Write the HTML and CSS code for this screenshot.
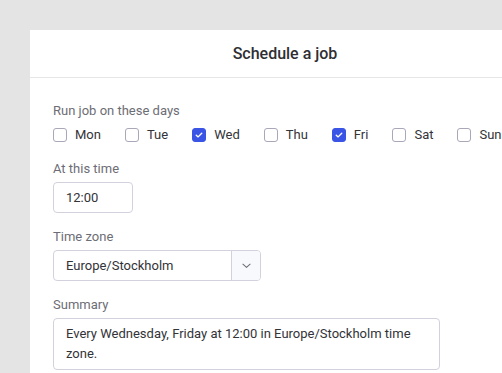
FILE: index.html
```html
<!DOCTYPE html>
<html lang="en">
<head>
<meta charset="utf-8">
<title>Schedule a job</title>
<link rel="stylesheet" href="styles.css">
</head>
<body>
<div class="page">
  <section class="card">
    <header class="card-header">
      <h1 class="card-title">Schedule a job</h1>
    </header>
    <div class="card-body">
      <div class="field">
        <div class="field-label">Run job on these days</div>
        <div class="days">
          <label class="day"><span class="box"></span><span class="day-name">Mon</span></label>
          <label class="day"><span class="box"></span><span class="day-name">Tue</span></label>
          <label class="day"><span class="box checked"><svg viewBox="0 0 14 14" class="tick"><path d="M3.8 7.2 L6 9.2 L10.2 4.9" /></svg></span><span class="day-name">Wed</span></label>
          <label class="day"><span class="box"></span><span class="day-name">Thu</span></label>
          <label class="day"><span class="box checked"><svg viewBox="0 0 14 14" class="tick"><path d="M3.8 7.2 L6 9.2 L10.2 4.9" /></svg></span><span class="day-name">Fri</span></label>
          <label class="day"><span class="box"></span><span class="day-name">Sat</span></label>
          <label class="day"><span class="box"></span><span class="day-name">Sun</span></label>
        </div>
      </div>
      <div class="field">
        <div class="field-label">At this time</div>
        <div class="input time-input">12:00</div>
      </div>
      <div class="field">
        <div class="field-label">Time zone</div>
        <div class="input select">
          <span class="select-value">Europe/Stockholm</span>
          <span class="select-button"><svg viewBox="0 0 10 6" class="chevron"><path d="M1 1 L5 4.6 L9 1" /></svg></span>
        </div>
      </div>
      <div class="field">
        <div class="field-label">Summary</div>
        <div class="input summary">Every Wednesday, Friday at 12:00 in Europe/Stockholm time zone.</div>
      </div>
    </div>
  </section>
</div>
</body>
</html>
```

FILE: styles.css
```css
html, body {
  margin: 0;
  padding: 0;
  background: #e4e4e4;
  font-family: Roboto, "Liberation Sans", Arial, sans-serif;
}

.page {
  box-sizing: border-box;
  width: 100vw;
  height: 100vh;
  padding: 30px 0 0 30px;
  overflow: hidden;
}

.card {
  background: #ffffff;
  width: 510px;
  min-height: 400px;
}

.card-header {
  height: 47px;
  border-bottom: 1px solid #e6e6e8;
  display: flex;
  align-items: center;
  justify-content: center;
}

.card-title {
  margin: 0;
  font-size: 16px;
  font-weight: 500;
  color: #2f2f33;
}

.card-body {
  padding: 25px 23px 0 23px;
  display: flex;
  flex-direction: column;
  gap: 16px;
}

.field {
  display: flex;
  flex-direction: column;
  align-items: flex-start;
}

.field-label {
  font-size: 13px;
  line-height: 16px;
  color: #6d6d75;
  margin-bottom: 5px;
}

.days {
  display: flex;
  gap: 24px;
  height: 21px;
  align-items: center;
  white-space: nowrap;
}

.day {
  display: flex;
  align-items: center;
  gap: 8px;
  font-size: 13px;
  color: #333338;
}

.box {
  width: 14px;
  height: 14px;
  box-sizing: border-box;
  border: 1px solid #a9a7b8;
  border-radius: 3px;
  background: #fff;
  display: flex;
}

.box.checked {
  background: #3a55e6;
  border-color: #3a55e6;
}

.tick {
  width: 12px;
  height: 12px;
}

.tick path {
  fill: none;
  stroke: #ffffff;
  stroke-width: 1.6;
  stroke-linecap: round;
  stroke-linejoin: round;
}

.input {
  box-sizing: border-box;
  border: 1px solid #d3d1de;
  border-radius: 4px;
  background: #fff;
  font-size: 13px;
  color: #333338;
}

.time-input {
  width: 80px;
  height: 31px;
  line-height: 29px;
  padding: 0 12px;
}

.select {
  width: 208px;
  height: 31px;
  display: flex;
  overflow: hidden;
}

.select-value {
  flex: 1;
  line-height: 29px;
  padding: 0 12px;
}

.select-button {
  width: 28px;
  border-left: 1px solid #d3d1de;
  background: #f8f9fc;
  display: flex;
  align-items: center;
  justify-content: center;
}

.chevron {
  width: 9px;
  height: 6px;
}

.chevron path {
  fill: none;
  stroke: #6d6d78;
  stroke-width: 1.2;
  stroke-linecap: round;
  stroke-linejoin: round;
}

.summary {
  width: 387px;
  height: 52px;
  padding: 5px 12px;
  line-height: 20px;
}
```
